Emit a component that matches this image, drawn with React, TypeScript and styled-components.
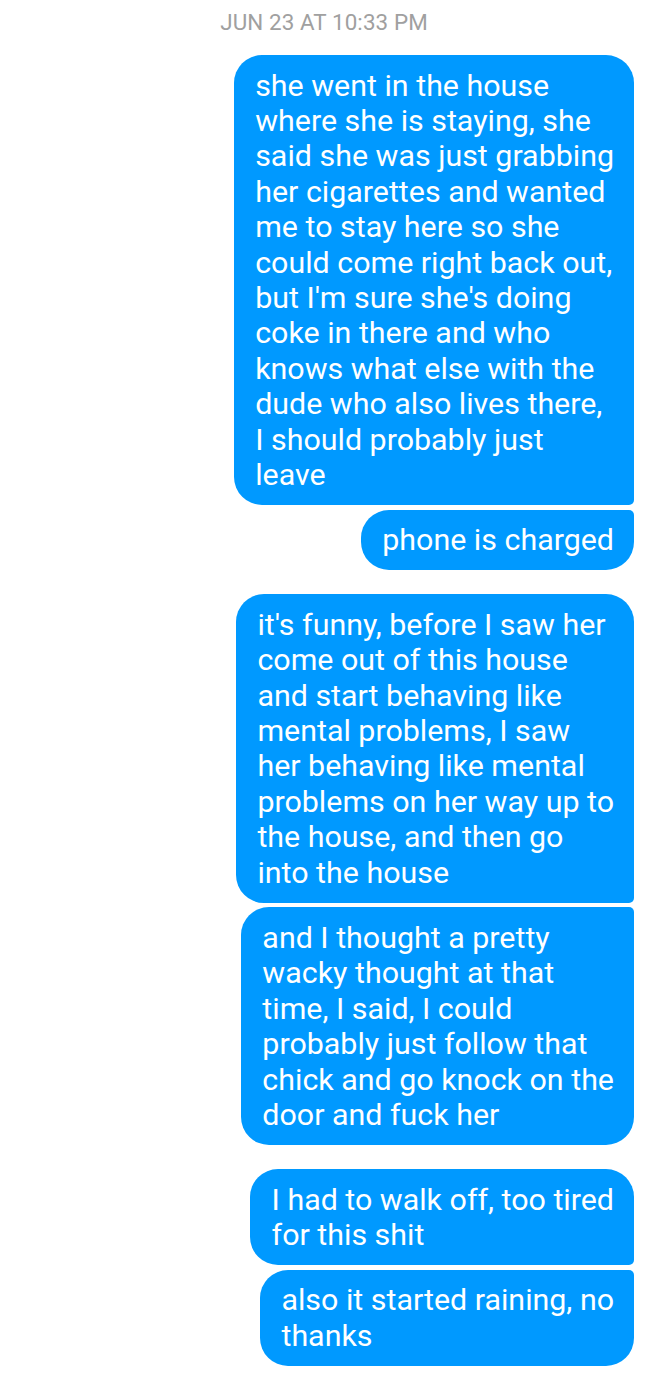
import styled, { createGlobalStyle } from "styled-components"

const GlobalStyle = createGlobalStyle`
  html, body {
    margin: 0;
    padding: 0;
    background: #ffffff;
  }
  body {
    font-family: Roboto, "Noto Sans", "Liberation Sans", sans-serif;
    -webkit-font-smoothing: antialiased;
  }
`

const Thread = styled.div`
  display: flex;
  flex-direction: column;
  width: 648px;
  min-height: 1383px;
  box-sizing: border-box;
  padding: 0 14px 16px 0;
`

const Timestamp = styled.div`
  align-self: center;
  margin: 10px 0 21px 14px;
  height: 24px;
  line-height: 24px;
  font-size: 22.4px;
  color: #a0a0a0;
  letter-spacing: 0.1px;
`

const Group = styled.div`
  display: flex;
  flex-direction: column;
  align-items: flex-end;
  gap: 4.6px;
  & + & {
    margin-top: 24px;
  }
`

type Position = "first" | "middle" | "last" | "single"

const radii: Record<Position, string> = {
  first: "28px 28px 5px 28px",
  middle: "28px 5px 5px 28px",
  last: "28px 5px 28px 28px",
  single: "28px",
}

const Bubble = styled.div<{ $pos: Position }>`
  background: #0099ff;
  color: #ffffff;
  font-size: 30.4px;
  line-height: 35.4px;
  padding: 12.6px 20px 12.6px 21.5px;
  border-radius: ${(props) => radii[props.$pos]};
  white-space: pre;
`

const groups: string[][] = [
  [
    "she went in the house\nwhere she is staying, she\nsaid she was just grabbing\nher cigarettes and wanted\nme to stay here so she\ncould come right back out,\nbut I'm sure she's doing\ncoke in there and who\nknows what else with the\ndude who also lives there,\nI should probably just\nleave",
    "phone is charged",
  ],
  [
    "it's funny, before I saw her\ncome out of this house\nand start behaving like\nmental problems, I saw\nher behaving like mental\nproblems on her way up to\nthe house, and then go\ninto the house",
    "and I thought a pretty\nwacky thought at that\ntime, I said, I could\nprobably just follow that\nchick and go knock on the\ndoor and fuck her",
  ],
  [
    "I had to walk off, too tired\nfor this shit",
    "also it started raining, no\nthanks",
  ],
]

const positionOf = (index: number, count: number): Position => {
  if (count === 1) return "single"
  if (index === 0) return "first"
  if (index === count - 1) return "last"
  return "middle"
}

const App = () => {
  return (
    <>
      <GlobalStyle />
      <Thread>
        <Timestamp>JUN 23 AT 10:33 PM</Timestamp>
        {groups.map((messages, g) => (
          <Group key={`group${g}`}>
            {messages.map((text, i) => (
              <Bubble key={`msg${g}-${i}`} $pos={positionOf(i, messages.length)}>
                {text}
              </Bubble>
            ))}
          </Group>
        ))}
      </Thread>
    </>
  )
}

export default App
